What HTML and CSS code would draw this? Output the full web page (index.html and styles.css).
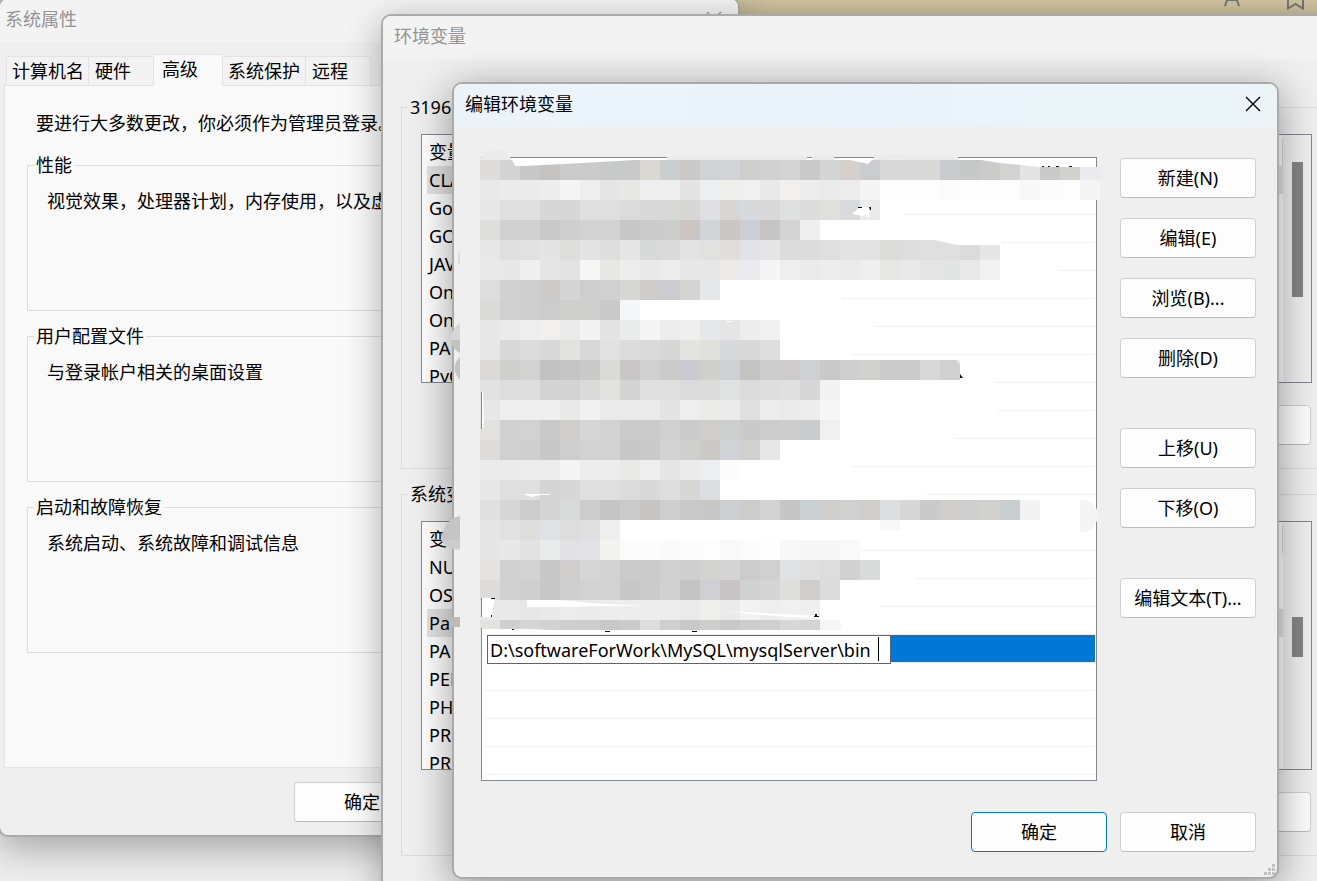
FILE: index.html
```html
<!DOCTYPE html>
<html lang="zh-CN">
<head>
<meta charset="utf-8">
<title>编辑环境变量</title>
<link rel="stylesheet" href="styles.css">
</head>
<body>
<main class="desktop">
  <svg class="desk-icons" width="97" height="14" viewBox="0 0 97 14" aria-hidden="true">
    <path d="M5 6 L9 -6 M19 6 L15 -6 M7 0 H17" />
    <path d="M68 -4 V8.500 L75.500 4 L83 8.500 V-4" />
  </svg>

  <section class="window window-system">
    <header class="titlebar titlebar-idle">
      <h2 class="title">系统属性</h2>
      <button class="close" type="button" aria-label="关闭"><svg width="16" height="16" viewBox="0 0 16 16"><path d="M1 1 L15 15 M15 1 L1 15"/></svg></button>
    </header>
    <div class="tabs" role="tablist">
      <button class="tab tab-wide" role="tab" type="button">计算机名</button>
      <button class="tab tab-mid" role="tab" type="button">硬件</button>
      <button class="tab tab-active" role="tab" type="button" aria-selected="true">高级</button>
      <button class="tab tab-wide" role="tab" type="button">系统保护</button>
      <button class="tab tab-mid" role="tab" type="button">远程</button>
    </div>
    <div class="panel">
      <p class="note">要进行大多数更改，你必须作为管理员登录。</p>
      <fieldset class="group"><legend>性能</legend><p>视觉效果，处理器计划，内存使用，以及虚</p></fieldset>
      <fieldset class="group"><legend>用户配置文件</legend><p>与登录帐户相关的桌面设置</p></fieldset>
      <fieldset class="group"><legend>启动和故障恢复</legend><p>系统启动、系统故障和调试信息</p></fieldset>
    </div>
    <footer class="system-footer"><button class="btn" type="button">确定</button></footer>
  </section>

  <section class="window window-env">
    <header class="titlebar titlebar-idle"><h2 class="title">环境变量</h2></header>
    <div class="env-body">
      <fieldset class="env-group">
        <legend>3196</legend>
        <div class="var-box">
          <ul class="vars">
            <li class="vars-head">变量</li>
            <li class="picked">CLA</li><li>Go</li><li>GO</li><li>JAV</li><li>On</li><li>On</li><li>PA</li><li>PyC</li>
          </ul>
          <div class="scroll"><div class="thumb thumb-long"></div></div>
        </div>
        <div class="env-actions"><button class="btn" type="button" aria-label="删除用户变量"></button></div>
      </fieldset>
      <fieldset class="env-group">
        <legend>系统变</legend>
        <div class="var-box">
          <ul class="vars">
            <li class="vars-head">变</li>
            <li>NU</li><li>OS</li><li class="picked">Pa</li><li>PA</li><li>PER</li><li>PH</li><li>PR</li><li>PR</li>
          </ul>
          <div class="scroll"><div class="thumb thumb-short"></div></div>
        </div>
        <div class="env-actions"><button class="btn" type="button" aria-label="删除系统变量"></button></div>
      </fieldset>
    </div>
  </section>

  <section class="window window-edit" role="dialog" aria-labelledby="edit-title">
    <header class="titlebar titlebar-live">
      <h1 class="title" id="edit-title">编辑环境变量</h1>
      <button class="close" type="button" aria-label="关闭"><svg width="16" height="16" viewBox="0 0 16 16"><path d="M1 1 L15 15 M15 1 L1 15"/></svg></button>
    </header>
    <div class="edit-body">
      <div class="paths">
        <ul class="rows">
          <li></li><li></li><li></li><li></li><li></li><li></li><li></li><li></li><li></li><li></li><li></li><li></li><li></li><li></li><li></li><li></li><li></li>
          <li class="selected"><input class="path-input" type="text" aria-label="路径" value="D:\softwareForWork\MySQL\mysqlServer\bin"><span class="caret"></span><span class="selected-fill"></span></li>
          <li></li><li></li><li></li><li></li>
        </ul>
        <svg class="mosaic" width="660" height="490" viewBox="440 150 660 490" aria-hidden="true">
          <g id="blanks" fill="#fff"></g>
          <path fill="#ebebeb" d="M480 161 Q484 149 496 149 Q507 149 512 161Z M667 160 V157 L710 155 H780 L807 157 V161Z M812 160 V156 H834 V161Z M874 161 V155 L900 154 L925 157 H958 V161Z"/>
          <g id="cells" shape-rendering="crispEdges"></g>
          <path fill="#fff" d="M511 158 H667 L635 160 L600 162 L545 165 L521 166 H515Z M840 158 H874 L868 164 L855 161Z M958 158 H1096 V167 H1040 L1000 163 L975 159 H958Z M934 240 H1002 V245 H957Z M852 214 L860 207 L870 207 L869 217Z"/>
          <path fill="#fff" d="M523 494 H550 V495 H540 L532 497Z M726 321 H732 V322 H726Z M527 600 H558 L590 603 L644 606 H600 L566 607 H527Z M728 611 L760 613 L820 616 V619 L790 617 L750 614Z"/>
          <path fill="#efefef" d="M956 360 L960 364 V360Z M1097 160 H1100 V167 H1097Z"/>
          <path fill="#fff" d="M482 392 H483 L484 428 H482Z M482 598 H495 L491 617 H482Z M482 629 H530 L570 631 H820 V633 H482Z"/>
          <path fill="#828790" d="M481 392 H482 V429 H481Z M481 598 H482 V617 H481Z M481 628 H482 V634 H481Z M807 157 H812 V158 H807Z M834 157 H874 V158 H834Z M1096 157 H1097 V167 H1096Z"/>
          <path fill="#f4f5f5" d="M1080 500 H1086 Q1098 504 1098 516 Q1096 530 1084 532 H1080Z M820 620 H838 Q844 626 840 630 H820Z"/>
          <path fill="#d6d6d4" d="M460 323 Q452 328 450 340 H460Z"/>
          <path fill="#c3c3c3" d="M450 340 Q454 351 460 353 V340Z M460 357 Q449 368 460 380Z"/>
          <path fill="#c5c5c5" d="M460 516 Q444 519 441 540 H460Z"/>
          <path fill="#cccccc" d="M441 540 H460 V550 L450 548 L444 544Z"/>
          <path fill="#bcbbb9" d="M448 617 H460 V627 H450Z"/>
          <path fill="#d8d8d8" d="M460 251 H459 L458 258 L459 265 H460Z"/>
          <path fill="#111" d="M1042 166h2v1h-2z M1048 166h2v1h-2z M1056 166h3v1h-3z M1069 166h3v1h-3z M858 207h4v1h-4z M869 207l2 0v3h-1z M960 374l3 4h-3z M491 598h4v1h-4z M491 615h1v2h-1z M814 616h1v-2h2v2h2v1h-5z M512 629h2v1h-2z M605 631h5v1h-5z M692 631h5v1h-5z"/>
        </svg>
      </div>
      <div class="side">
        <button class="btn" type="button">新建(N)</button>
        <button class="btn" type="button">编辑(E)</button>
        <button class="btn" type="button">浏览(B)...</button>
        <button class="btn" type="button">删除(D)</button>
        <button class="btn side-break" type="button">上移(U)</button>
        <button class="btn" type="button">下移(O)</button>
        <button class="btn side-break" type="button">编辑文本(T)...</button>
      </div>
    </div>
    <footer class="edit-footer">
      <button class="btn btn-default" type="button">确定</button>
      <button class="btn" type="button">取消</button>
    </footer>
    <svg class="grip" width="12" height="12" viewBox="0 0 12 12" aria-hidden="true"><path fill="#bfbfbf" d="M8 0h3v3h-3z M4 4h3v3h-3z M8 4h3v3h-3z M0 8h3v3h-3z M4 8h3v3h-3z M8 8h3v3h-3z"/></svg>
  </section>
</main>
<script src="mosaic.js"></script>
</body>
</html>
```

FILE: styles.css
```css
* { box-sizing: border-box; }
body {
  margin: 0;
  font: 18px/24px "Noto Sans", "Noto Sans CJK SC", sans-serif;
  color: #000;
}
h1, h2, p, ul { margin: 0; padding: 0; font: inherit; }
ul { list-style: none; }
fieldset { margin: 0; min-width: 0; border: 1px solid #dcdcdc; }
button, input { font: inherit; color: inherit; }

.desktop {
  position: relative;
  min-height: 100vh;
  overflow: hidden;
  background: linear-gradient(#d2c5a2, #c9bc99 16px, #eee 17px);
}
.desk-icons {
  position: absolute;
  top: 0;
  right: 0;
  overflow: visible;
  fill: none;
  stroke: #777;
  stroke-width: 2;
}

.window {
  position: absolute;
  display: flex;
  flex-direction: column;
  border: 2px solid #aaa;
  border-radius: 10px;
  background: #efefef;
}
.window-system {
  inset: -3px 577px 44px -2px;
  box-shadow: 0 12px 36px rgba(0, 0, 0, .3);
}
.window-env {
  inset: 14px -20px -60px 381px;
  box-shadow: 0 8px 36px rgba(0, 0, 0, .3);
}
.window-edit {
  inset: 82px 38px 2px 452px;
  box-shadow: 0 8px 40px rgba(0, 0, 0, .4);
}

.titlebar {
  display: flex;
  align-items: center;
  justify-content: space-between;
  height: 43px;
  padding: 0 16px 3px 11px;
  border-radius: 8px 8px 0 0;
  flex: none;
}
.titlebar-idle { background: #f3f3f3; color: #949494; }
.titlebar-live { background: linear-gradient(90deg, #eaf4f8, #eaf3fb 50%, #ebf5f8); }
.window-system .titlebar { padding-left: 5px; }
.close {
  display: flex;
  padding: 0;
  border: 0;
  background: none;
}
.close svg { fill: none; stroke: currentColor; stroke-width: 1.4; }

.btn {
  width: 136px;
  height: 40px;
  padding: 0;
  border: 1px solid #d0d0d0;
  border-bottom-color: #bbb;
  border-radius: 4px;
  background: #fdfdfd;
  text-align: center;
}
.btn-default { border-color: #0078d4; }

.tabs {
  display: flex;
  align-items: flex-end;
  height: 43px;
  padding-left: 6px;
  flex: none;
}
.tab {
  height: 29px;
  padding: 0 0 0 5px;
  border: 1px solid #e3e3e3;
  border-width: 1px 1px 0 0;
  background: #f3f3f3;
  text-align: left;
}
.tab:first-child { border-left-width: 1px; }
.tab-wide { width: 83px; }
.tab-mid { width: 65px; padding-left: 6px; }
.tab-active {
  position: relative;
  width: 69px;
  height: 32px;
  margin-bottom: -1px;
  padding: 0 0 3px 8px;
  background: #f9f9f9;
}
.panel {
  flex: 1;
  display: flex;
  flex-direction: column;
  gap: 13px;
  margin: 0 6px 0 4px;
  padding: 25px 22px 0;
  border: 1px solid #e3e3e3;
  background: #f9f9f9;
}
.note { padding: 0 0 5px 9px; white-space: nowrap; }
.group { min-height: 158px; padding: 12px 0 0 19px; }
.group legend, .env-group legend { padding: 0 2px; }
.group legend { margin-left: -13px; }
.system-footer { padding: 14px 0 13px 294px; }

.env-body {
  display: flex;
  flex-direction: column;
  gap: 13px;
  padding: 36px 14px 0 18px;
}
.env-group { padding: 15px 8px 23px 19px; }
.env-group legend { margin-left: -13px; }
.var-box {
  display: flex;
  height: 249px;
  border: 1px solid #828790;
  background: #fff;
  overflow: hidden;
}
.vars { flex: 1; padding: 3px 0 0 5px; }
.vars li { height: 28px; padding-left: 2px; line-height: 28px; }
.vars .vars-head { border-right: 1px solid #d9d9d9; }
.vars .picked { background: #e3e3e3; }
.scroll { width: 28px; padding-left: 9px; background: #f0f0f0; }
.thumb { width: 11px; background: #858585; }
.thumb-long { height: 135px; margin-top: 27px; }
.thumb-short { height: 40px; margin-top: 95px; }
.env-actions { display: flex; justify-content: flex-end; padding: 22px 1px 0 0; }

.edit-body {
  flex: 1;
  display: grid;
  grid-template-columns: 1fr 136px;
  gap: 23px;
  padding: 30px 21px 0 27px;
}
.paths {
  position: relative;
  padding: 1px 1px 5px 2px;
  border: 1px solid #828790;
  background: #fff;
}
.rows li { height: 28px; border-bottom: 1px solid #efefef; }
.rows .selected {
  position: relative;
  display: flex;
  padding-left: 3px;
}
.selected-fill { flex: 1; background: #0078d7; }
.path-input {
  width: 404px;
  height: 29px;
  padding: 0 2px;
  border: 1px solid #646464;
  background: #fff;
  outline: 0;
}
.caret {
  position: absolute;
  left: 394px;
  top: 2px;
  width: 1px;
  height: 24px;
  background: #000;
}
.mosaic { position: absolute; left: -42px; top: -8px; overflow: visible; pointer-events: none; }
.side {
  display: flex;
  flex-direction: column;
  gap: 20px;
  padding-top: 1px;
}
.side-break { margin-top: 30px; }
.edit-footer {
  display: flex;
  justify-content: flex-end;
  gap: 13px;
  padding: 31px 21px 25px;
}
.paths { margin-bottom: 0; padding-bottom: 4px; }
.grip { position: absolute; right: 1px; bottom: 1px; }
```

FILE: mosaic.js
```js
// Colour cells that cover the hidden entries; two digits stand for a grey level.
const CELL = 20, LEFT = 480, TOP = 160;
const rows = [
  "dddcda d3 c6c8c9 c5c3c1 cb cdcbc9 c8c9cb c8c9c9 d9d8d3 c9ced1 cbcac8 d0d2d4 d2d4d7 d0cecc cfd1d3 d4 c9 d3d6d4 d6d0cc cacccf d8 d9 dad9d7 c9cccf c7c9c8 cdcbca d1d3d1 e4 ca d1d1ce e9ebee",
  "e9 eb eb ed f4 ee e5 e8e8e6 ef ef e5e4e2 edeff2 efefed eff1f0 e9 f1f0ee ed e8ebe9 ec f5 fd fd fd fb fd fd fd f8 fc fd f4f5f5",
  "e8 df df d7 d7 df df db d9 d8dad8 d9d7d5 dddfe1 d8d6d4 d6dadd d9 dde0df dc e0dfdb d9dadd e9ebed",
  "dddddb d0 d0 c9 ce d2 d2 c8 cb cccdcb cbc6c3 d1d5d8 ccc7c4 cbcfd3 c7c5c4 d4 ef",
  "e8 dfdfdd e1 e4 dededc e4 dededc e6 d8dad9 dcdad9 e3 e0e2e0 e0dddc e1e3e6 e6 dc dc dde0df e3 e3 dcdcda dd df df db e4e7e6",
  "e9 e7e9e8 ef e5 e3 f6 e7e7e4 ed e9 ebedec e7 e6e8e7 edebe9 e9ebee f5 ee ea ed ea ee e7e7e6 e9 e5 e3e5e4 e9 f1f3f2",
  "dd d1 cf cccbc9 d5 ce d0 d6d6d4 cfcdcb cbccd0 d4d4d2 e5e7e9",
  "dadad8 d0 cf cc cfcfcc d0cecd ca f5f7f9",
  "e8 e9ebea ee f1f0ee ea f3 e4 eaeceb f5 ec f0efed e6e8ea e5 ed f1",
  "e8 d8d9d8 dc d8 e2e2df d8 e1 dc da d7 e4e4e1 e0e0dd d8d9dc d8 dcdfdd",
  "dbdad8 cfcfcc d0d3d1 c2 c5 ca dadad7 c9c6c8 d0 cccbc9 cacbd0 cfcfcc d0d1d4 c5c3c1 cbcdcf cecccb ced0d4 cbcac8 cf d1d1ce cb c9cccb d8 d0",
  "e2 dd dcdedd d3 d3 da e2e2df d3 df e0dfdd dadbdd dc e0e2e1 dc dfdedc e0 d7 f1f3f5",
  "e8 efefed ef ef e9 f1 ea ea ea e4 ee ebebe9 eb dfe1e0 ed ea ed f5f7f6",
  "e2e1de d0 d1d2d4 c9 d0cfcc d7 d3 cb cb cfd1d0 cb cfcecb cdcfce ca cc cd cacbcc f0",
  "dddcda d0 cf c8 ce d2 d2 c8 ca d3 cfcfcd cccac7 d2d3d8 d0d0ce e5e7e9",
  "ea ea ec ec f4 ed ed e9e9e7 ef e6 ecebe9 edeff1 fc",
  "e8 df df d5 d7 df df db d9 dd d8d7d5 dddee1",
  "e0 d6 cecccb d5 d9dbda cecccb c3c5c7 cb c7c6c5 ce c9 c8c8c7 cecfd2 cecccb d0d3d1 c6 cacfd2 cfcecb d0 cfcecb dddee1 d7 ca cfcecb cf d2d1ce c9ced1 f3",
  "e6 e1 dfdddb dfe1e4 dd df ee",
  "e6 e8 e2 e9ebea e2e2e4 e1e3e6 f3f3f0 fb fc fa fc fd f9 fb fe f8 f7 f7 f9",
  "e4e3e1 d0 d1d3d5 c8 d0cecc d6 d2 cb cb d1d0ce cdcfd1 d2d2cf d4 cbcccb d2d0ce e1e2e4 e0 dd d1 d9dbda",
  "dddcda d0 cf c8 ce d2 d2 c8 cb d2d1cf c4 ced0d3 c9c5c6 cfd1d3 d5 dededc d0cecd dbdddc",
  "e9 e9 e5e7e9 e9 ebeceb eb ed ed ed efedeb e9ebea efefec ea f2f3f0 ee f0 ef",
  "e2e2df cfcfce d5 d2 ce ce c8 cacbcc dd cf c8 ce c8 cccece cf d8 d5"
];
const ruleEnds = [[186, 1095], [214, 904], [242, 938], [270, 1058], [298, 842], [326, 874], [354, 852], [382, 995],
  [410, 998], [438, 954], [466, 852], [494, 927], [522, 1095], [550, 859], [578, 917], [606, 881]];

function addRect(parent, x, y, width, height, fill) {
  const rect = document.createElementNS("http://www.w3.org/2000/svg", "rect");
  const attrs = { x, y, width, height };
  for (const key in attrs) rect.setAttribute(key, attrs[key]);
  if (fill) rect.setAttribute("fill", fill);
  parent.append(rect);
}
const blanks = document.getElementById("blanks");
ruleEnds.forEach(([y, end]) => addRect(blanks, 482, y - 1, end - 482, 3));

const cells = document.getElementById("cells");
rows.forEach((row, r) => row.split(" ").forEach((c, i) => {
  const height = r === rows.length - 1 ? 10 : CELL;
  addRect(cells, LEFT + i * CELL, TOP + r * CELL, CELL, height, "#" + (c.length === 2 ? c.repeat(3) : c));
}));
addRect(cells, 880, 520, 20, 10, "#f8f8f8");
```
